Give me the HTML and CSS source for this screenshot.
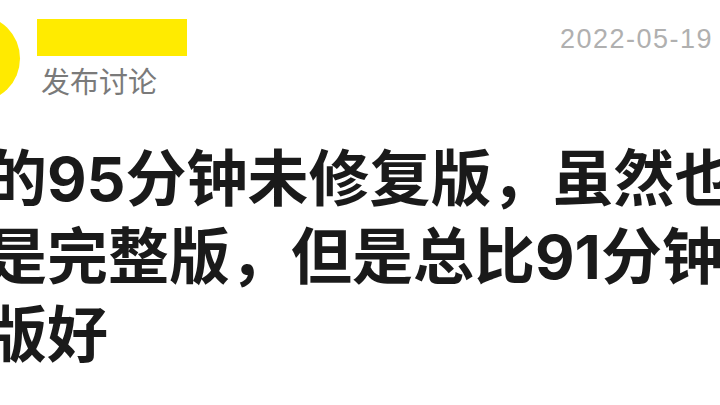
FILE: index.html
```html
<!DOCTYPE html>
<html lang="zh">
<head>
<meta charset="utf-8">
<link rel="stylesheet" href="styles.css">
</head>
<body>
<div class="page">
  <div class="header">
    <div class="avatar"></div>
    <div class="meta">
      <div class="name-bar"></div>
      <div class="action">发布讨论</div>
    </div>
    <div class="date">2022-05-19</div>
  </div>
  <div class="content">
    <div class="line">的95分钟未修复版，虽然也不</div>
    <div class="line">是完整版，但是总比91分钟的</div>
    <div class="line">版好</div>
  </div>
</div>
</body>
</html>
```

FILE: styles.css
```css
html, body {
  margin: 0;
  padding: 0;
  background: #ffffff;
}
.page {
  width: 720px;
  height: 405px;
  overflow: hidden;
  background: #ffffff;
}
.header {
  display: flex;
  align-items: flex-start;
  height: 120px;
}
.avatar {
  flex: none;
  width: 87px;
  height: 87px;
  margin-left: -67px;
  margin-top: 15px;
  border-radius: 50%;
  background: #ffea00;
}
.meta {
  margin-left: 17px;
  margin-top: 19px;
  display: flex;
  flex-direction: column;
}
.name-bar {
  width: 150px;
  height: 37px;
  background: #ffeb00;
}
.action {
  margin-top: 4px;
  margin-left: 4px;
  font-family: "Noto Sans CJK SC", sans-serif;
  font-size: 29px;
  line-height: 40px;
  color: #7a7a7a;
}
.date {
  margin-left: auto;
  margin-top: 23px;
  padding-right: 7px;
  font-family: "Liberation Sans", Arial, sans-serif;
  font-size: 27px;
  line-height: 32px;
  letter-spacing: 1.5px;
  color: #b0b0b0;
}
.content {
  margin-left: -14px;
  margin-top: 20px;
  font-family: Inter, "Noto Sans CJK SC", sans-serif;
  font-weight: 700;
  font-size: 61px;
  line-height: 78px;
  color: #1a1a1a;
}
.line {
  white-space: nowrap;
}
```
